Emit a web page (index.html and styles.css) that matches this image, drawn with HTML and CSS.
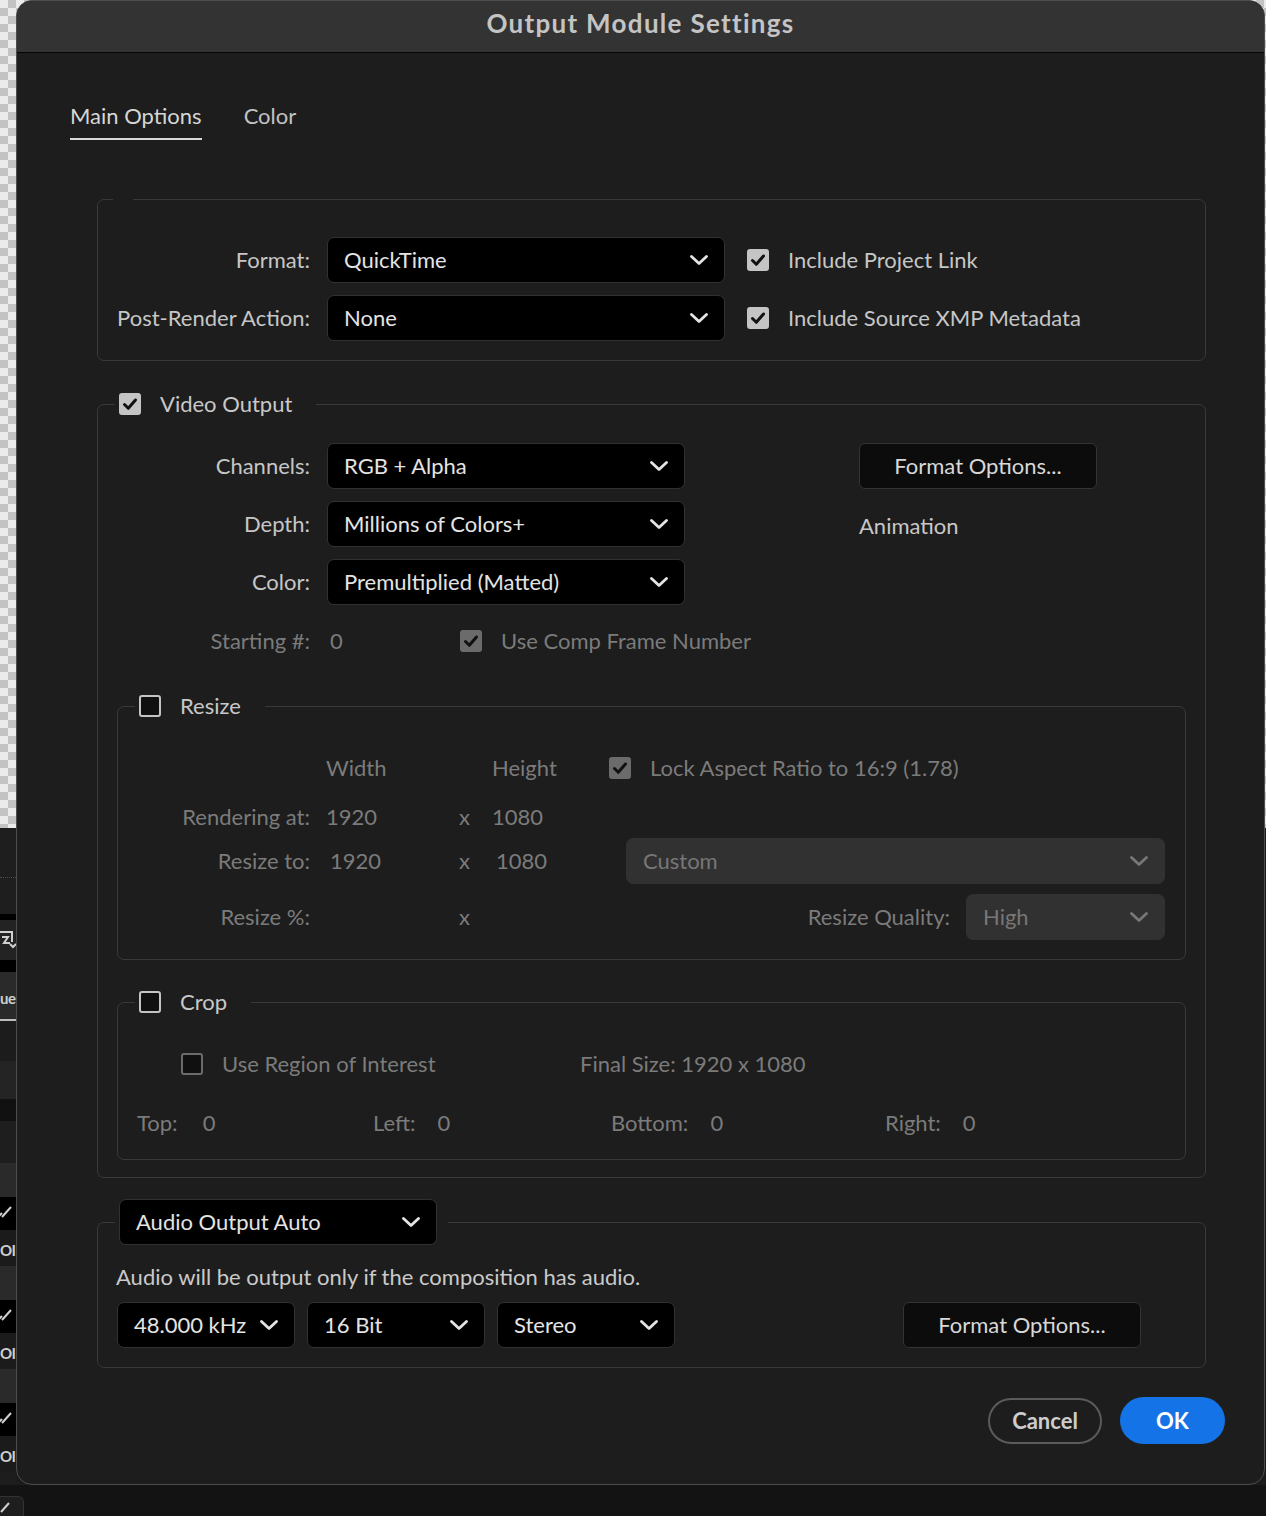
FILE: index.html
```html
<!DOCTYPE html>
<html lang="en">
<head>
    <meta charset="UTF-8">
    <title>Output Module Settings</title>
    <link rel="stylesheet" href="styles.css">
</head>
<body>
    <div class="desk">
        <div class="strip">
            <div class="seg-checker"></div>
            <div class="seg-top"></div>
            <div class="seg-rule"></div>
            <div class="seg-icon">
                <svg viewBox="0 0 16 24"><path d="M-2 4h14v10M10 16l3 3 3-3M2 9l6 0-4 6h6"/></svg>
            </div>
            <div class="seg-rule thick"></div>
            <div class="seg-tab">ue</div>
            <div class="seg-dark"></div>
            <div class="seg-mid"></div>
            <div class="seg-rule wide"></div>
            <div class="seg-dark tall"></div>
            <div class="seg-gap"></div>
            <div class="seg-check"><svg viewBox="0 0 16 20"><path d="M-2 14l4-4M2 14l9-10"/></svg></div>
            <div class="seg-ol">OI</div>
            <div class="seg-gap"></div>
            <div class="seg-check"><svg viewBox="0 0 16 20"><path d="M-2 14l4-4M2 14l9-10"/></svg></div>
            <div class="seg-ol">OI</div>
            <div class="seg-gap"></div>
            <div class="seg-check"><svg viewBox="0 0 16 20"><path d="M-2 14l4-4M2 14l9-10"/></svg></div>
            <div class="seg-ol">OI</div>
            <div class="seg-end"></div>
        </div>

        <div class="dialog">
            <div class="titlebar">Output Module Settings</div>

            <div class="dialog-body">
                <div class="tabs">
                    <div class="tab active">Main Options</div>
                    <div class="tab">Color</div>
                </div>

                <div class="groups">
                    <!-- format -->
                    <fieldset class="group group-format">
                        <legend class="legend-empty"></legend>
                        <div class="row">
                            <span class="lbl">Format:</span>
                            <div class="select w-format">
                                <span>QuickTime</span>
                                <svg class="chev" viewBox="0 0 18 10"><path d="M1.5 1.5l7.5 7 7.5-7"/></svg>
                            </div>
                            <div class="check-item ml-format">
                                <span class="cb on"><svg viewBox="0 0 22 22"><path d="M5.5 11.5l3.8 3.8 7.2-8.3"/></svg></span>
                                Include Project Link
                            </div>
                        </div>
                        <div class="row gap-row">
                            <span class="lbl">Post-Render Action:</span>
                            <div class="select w-format">
                                <span>None</span>
                                <svg class="chev" viewBox="0 0 18 10"><path d="M1.5 1.5l7.5 7 7.5-7"/></svg>
                            </div>
                            <div class="check-item ml-format">
                                <span class="cb on"><svg viewBox="0 0 22 22"><path d="M5.5 11.5l3.8 3.8 7.2-8.3"/></svg></span>
                                Include Source XMP Metadata
                            </div>
                        </div>
                    </fieldset>

                    <!-- video output -->
                    <fieldset class="group group-video">
                        <legend class="legend-check">
                            <span class="cb on"><svg viewBox="0 0 22 22"><path d="M5.5 11.5l3.8 3.8 7.2-8.3"/></svg></span>
                            Video Output
                        </legend>

                        <div class="video-top">
                            <div class="video-left">
                                <div class="row">
                                    <span class="lbl">Channels:</span>
                                    <div class="select w-video">
                                        <span>RGB + Alpha</span>
                                        <svg class="chev" viewBox="0 0 18 10"><path d="M1.5 1.5l7.5 7 7.5-7"/></svg>
                                    </div>
                                </div>
                                <div class="row gap-row">
                                    <span class="lbl">Depth:</span>
                                    <div class="select w-video">
                                        <span>Millions of Colors+</span>
                                        <svg class="chev" viewBox="0 0 18 10"><path d="M1.5 1.5l7.5 7 7.5-7"/></svg>
                                    </div>
                                </div>
                                <div class="row gap-row">
                                    <span class="lbl">Color:</span>
                                    <div class="select w-video">
                                        <span>Premultiplied (Matted)</span>
                                        <svg class="chev" viewBox="0 0 18 10"><path d="M1.5 1.5l7.5 7 7.5-7"/></svg>
                                    </div>
                                </div>
                            </div>
                            <div class="video-right">
                                <div class="button">Format Options...</div>
                                <div class="codec">Animation</div>
                            </div>
                        </div>

                        <div class="row start-row dim">
                            <span class="lbl">Starting #:</span>
                            <span class="start-val">0</span>
                            <div class="check-item">
                                <span class="cb on dim"><svg viewBox="0 0 22 22"><path d="M5.5 11.5l3.8 3.8 7.2-8.3"/></svg></span>
                                Use Comp Frame Number
                            </div>
                        </div>

                        <!-- resize -->
                        <fieldset class="group sub group-resize">
                            <legend class="legend-check">
                                <span class="cb"></span>
                                Resize
                            </legend>
                            <div class="rgrid r1 dim">
                                <span></span>
                                <span>Width</span>
                                <span></span>
                                <span>Height</span>
                                <div class="check-item">
                                    <span class="cb on dim"><svg viewBox="0 0 22 22"><path d="M5.5 11.5l3.8 3.8 7.2-8.3"/></svg></span>
                                    Lock Aspect Ratio to 16:9 (1.78)
                                </div>
                            </div>
                            <div class="rgrid r2 dim">
                                <span class="rlbl">Rendering at:</span>
                                <span>1920</span>
                                <span>x</span>
                                <span>1080</span>
                                <span></span>
                            </div>
                            <div class="rgrid r3 dim">
                                <span class="rlbl">Resize to:</span>
                                <span class="field">1920</span>
                                <span>x</span>
                                <span class="field">1080</span>
                                <div class="select off w-custom">
                                    <span>Custom</span>
                                    <svg class="chev" viewBox="0 0 18 10"><path d="M1.5 1.5l7.5 7 7.5-7"/></svg>
                                </div>
                            </div>
                            <div class="rgrid r4 dim">
                                <span class="rlbl">Resize %:</span>
                                <span></span>
                                <span>x</span>
                                <span></span>
                                <div class="quality">
                                    <span>Resize Quality:</span>
                                    <div class="select off w-quality">
                                        <span>High</span>
                                        <svg class="chev" viewBox="0 0 18 10"><path d="M1.5 1.5l7.5 7 7.5-7"/></svg>
                                    </div>
                                </div>
                            </div>
                        </fieldset>

                        <!-- crop -->
                        <fieldset class="group sub group-crop">
                            <legend class="legend-check">
                                <span class="cb"></span>
                                Crop
                            </legend>
                            <div class="crop-row1 dim">
                                <div class="check-item roi">
                                    <span class="cb dim"></span>
                                    Use Region of Interest
                                </div>
                                <span>Final Size: 1920 x 1080</span>
                            </div>
                            <div class="crop-row2 dim">
                                <div class="edge w-top"><span>Top:</span><span>0</span></div>
                                <div class="edge w-left"><span>Left:</span><span>0</span></div>
                                <div class="edge w-bottom"><span>Bottom:</span><span>0</span></div>
                                <div class="edge"><span>Right:</span><span>0</span></div>
                            </div>
                        </fieldset>
                    </fieldset>

                    <!-- audio -->
                    <fieldset class="group group-audio">
                        <legend class="legend-select">
                            <div class="select w-audio">
                                <span>Audio Output Auto</span>
                                <svg class="chev" viewBox="0 0 18 10"><path d="M1.5 1.5l7.5 7 7.5-7"/></svg>
                            </div>
                        </legend>
                        <div class="audio-note">Audio will be output only if the composition has audio.</div>
                        <div class="audio-row">
                            <div class="select w-small">
                                <span>48.000 kHz</span>
                                <svg class="chev" viewBox="0 0 18 10"><path d="M1.5 1.5l7.5 7 7.5-7"/></svg>
                            </div>
                            <div class="select w-small">
                                <span>16 Bit</span>
                                <svg class="chev" viewBox="0 0 18 10"><path d="M1.5 1.5l7.5 7 7.5-7"/></svg>
                            </div>
                            <div class="select w-small">
                                <span>Stereo</span>
                                <svg class="chev" viewBox="0 0 18 10"><path d="M1.5 1.5l7.5 7 7.5-7"/></svg>
                            </div>
                            <div class="button audio-btn">Format Options...</div>
                        </div>
                    </fieldset>
                </div>

                <div class="actions">
                    <div class="btn-cancel">Cancel</div>
                    <div class="btn-ok">OK</div>
                </div>
            </div>
        </div>
    </div>

    <div class="dock">
        <div class="dock-tab"><svg viewBox="0 0 16 14"><path d="M1 12l8-9"/></svg></div>
    </div>
</body>
</html>
```

FILE: styles.css
```css
* {
    box-sizing: border-box;
}

body {
    margin: 0;
    background: #121212;
    font-family: Lato, "Noto Sans", sans-serif;
    font-size: 22px;
    line-height: 24px;
    color: #c6c6c6;
}

.desk {
    display: flex;
    height: 1485px;
    background:
        linear-gradient(#1c1c1c, #1c1c1c) 0 828px / 100% 657px no-repeat,
        repeating-conic-gradient(#c3c3c3 0 25%, #ebebeb 0 50%) 0 0 / 16px 16px;
}

/* left edge of the app behind the dialog */
.strip {
    width: 16px;
    flex: none;
    overflow: hidden;
    display: flex;
    flex-direction: column;
    color: #cfcfcf;
    font-weight: 700;
    font-size: 12px;
    letter-spacing: -0.5px;
}

.strip svg {
    width: 16px;
    fill: none;
    stroke: #d0d0d0;
    stroke-width: 2;
}

.seg-checker { height: 828px; }
.seg-top { height: 86px; background: #1e1e1e; position: relative; }
.seg-top::after {
    content: "";
    position: absolute;
    left: 0;
    right: 0;
    top: 49px;
    border-top: 1px dotted #4a4a4a;
}
.seg-rule { height: 6px; background: #000; }
.seg-rule.thick { height: 12px; }
.seg-rule.wide { height: 22px; background: #111; }
.seg-icon { height: 40px; background: #232323; padding-top: 8px; }
.seg-icon svg { height: 24px; }
.seg-tab {
    height: 49px;
    background: #2a2a2a;
    padding-top: 14px;
    font-size: 15px;
    border-bottom: 2px solid #bdbdbd;
}
.seg-dark { height: 40px; background: #1c1c1c; }
.seg-dark.tall { height: 42px; background: #1e1e1e; }
.seg-mid { height: 38px; background: #242424; }
.seg-gap { height: 34px; background: #2a2a2a; }
.seg-check { height: 33px; background: #000; padding-top: 6px; }
.seg-check svg { height: 20px; }
.seg-ol { height: 36px; background: #1b1b1b; padding-top: 8px; font-size: 15px; }
.seg-end { flex: 1; background: #1d1d1d; }

/* dialog */
.dialog {
    width: 1249px;
    flex: none;
    height: 1485px;
    border: 1px solid #4d4d4d;
    border-radius: 16px;
    background: #1d1d1d;
    overflow: hidden;
}

.titlebar {
    height: 52px;
    padding-bottom: 7px;
    line-height: 44px;
    background: #333333;
    border-bottom: 1px solid #050505;
    text-align: center;
    font-size: 26px;
    font-weight: 700;
    letter-spacing: 1.3px;
    color: #c4c4c4;
}

.dialog-body {
    padding: 49px 0 0 0;
}

.tabs {
    display: flex;
    gap: 42px;
    margin-left: 53px;
}

.tab {
    line-height: 28px;
    padding-bottom: 8px;
    border-bottom: 2px solid transparent;
    color: #c2c2c2;
}

.tab.active {
    color: #d6d6d6;
    border-bottom-color: #d8d8d8;
}

.groups {
    margin: 59px 58px 0 80px;
}

/* group boxes */
.group {
    margin: 0;
    padding: 0;
    min-width: 0;
    border: 1px solid #393939;
    border-radius: 7px;
}

.group legend {
    margin-left: 17px;
    padding: 0 24px 0 4px;
}

.legend-empty {
    height: 0;
    width: 20px;
}

.group .legend-empty {
    margin-left: 15px;
    padding: 0;
}

.legend-check {
    display: flex;
    align-items: center;
    gap: 19px;
    height: 24px;
    line-height: 22px;
    color: #c8c8c8;
}

.group .legend-select {
    padding-right: 11px;
}

.group-format {
    padding: 37px 0 19px 0;
}

.group-video {
    margin-top: 31px;
    padding: 27px 0 17px 0;
}

.group.sub {
    margin-left: 19px;
    margin-right: 19px;
}

.group-resize {
    margin-top: 38px;
    padding: 0 20px 19px 0;
}

.group-crop {
    margin-top: 30px;
    padding: 0 0 21px 0;
}

.group-audio {
    margin-top: 21px;
    padding: 20px 0 19px 0;
}

/* rows */
.row {
    display: flex;
    align-items: center;
    height: 46px;
}

.gap-row {
    margin-top: 12px;
}

.lbl {
    flex: none;
    width: 212px;
    margin-right: 17px;
    text-align: right;
}

.dim {
    color: #7b7b7b;
}

/* controls */
.select {
    flex: none;
    display: flex;
    align-items: center;
    justify-content: space-between;
    height: 46px;
    padding: 0 16px;
    background: #000;
    border: 1px solid #313131;
    border-radius: 7px;
    color: #e4e4e4;
}

.select.off {
    background: #313131;
    border-color: #313131;
    color: #777;
}

.chev {
    width: 18px;
    height: 10px;
    fill: none;
    stroke: currentColor;
    stroke-width: 2.8;
    stroke-linecap: round;
    stroke-linejoin: round;
}

.w-format { width: 398px; }
.w-video { width: 358px; }
.w-custom { width: 539px; margin-left: 17px; }
.w-quality { width: 199px; }
.w-audio { width: 318px; }
.w-small { width: 178px; }

.cb {
    flex: none;
    width: 22px;
    height: 22px;
    border-radius: 3px;
    border: 2px solid #c4c4c4;
    background: #101010;
}

.cb.on {
    border: 0;
    background: #c4c4c4;
}

.cb.dim {
    border-color: #6b6b6b;
}

.cb.on.dim {
    background: #6b6b6b;
}

.cb svg {
    display: block;
    width: 22px;
    height: 22px;
    fill: none;
    stroke: #111;
    stroke-width: 3;
    stroke-linecap: round;
    stroke-linejoin: round;
}

.check-item {
    display: flex;
    align-items: center;
    gap: 19px;
}

.ml-format {
    margin-left: 22px;
}

.button {
    display: flex;
    align-items: center;
    justify-content: center;
    width: 238px;
    height: 46px;
    background: #0c0c0c;
    border: 1px solid #333;
    border-radius: 6px;
    color: #d8d8d8;
}

/* video output */
.video-top {
    display: flex;
}

.video-left {
    width: 587px;
}

.video-right {
    margin-left: 174px;
}

.codec {
    margin-top: 25px;
    color: #c8c8c8;
}

.start-row {
    height: 30px;
    margin-top: 21px;
}

.start-val {
    width: 133px;
    padding-left: 3px;
}

/* resize */
.rgrid {
    display: grid;
    grid-template-columns: 192px 117px 17px 101px 1fr;
    column-gap: 16px;
    align-items: center;
}

.rlbl {
    text-align: right;
}

.r1 { height: 30px; margin-top: 35px; }
.r2 { height: 30px; margin-top: 19px; }
.r3 { height: 46px; margin-top: 6px; }
.r4 { height: 46px; margin-top: 10px; }

.field {
    padding-left: 4px;
}

.quality {
    display: flex;
    align-items: center;
    justify-content: flex-end;
    gap: 16px;
}

/* crop */
.crop-row1 {
    display: flex;
    align-items: center;
    height: 30px;
    margin-top: 35px;
    padding-left: 63px;
}

.roi {
    width: 399px;
}

.crop-row2 {
    display: flex;
    align-items: center;
    height: 30px;
    margin-top: 29px;
    padding-left: 19px;
}

.edge {
    display: flex;
    gap: 22px;
}

.w-top { width: 236px; gap: 25px; }
.w-left { width: 238px; }
.w-bottom { width: 274px; }

/* audio */
.audio-note {
    padding-left: 18px;
    color: #cacaca;
}

.audio-row {
    display: flex;
    align-items: center;
    gap: 12px;
    margin-top: 13px;
    padding-left: 19px;
}

.audio-btn {
    margin-left: 216px;
}

/* dialog buttons */
.actions {
    display: flex;
    justify-content: flex-end;
    align-items: center;
    gap: 18px;
    margin-top: 29px;
    padding-right: 39px;
}

.btn-cancel,
.btn-ok {
    display: flex;
    align-items: center;
    justify-content: center;
    border-radius: 24px;
    font-weight: 700;
}

.btn-cancel {
    width: 114px;
    height: 46px;
    border: 2px solid #5b5b5b;
    color: #cdcdcd;
}

.btn-ok {
    width: 105px;
    height: 47px;
    background: #1473e6;
    color: #fff;
}

/* bottom dock */
.dock {
    height: 31px;
    background: #131313;
    padding-top: 11px;
}

.dock-tab {
    width: 24px;
    height: 20px;
    background: #1e1e1e;
    border: 1px solid #333;
    border-left: 0;
    border-bottom: 0;
    border-top-right-radius: 6px;
}

.dock-tab svg {
    display: block;
    width: 16px;
    height: 14px;
    margin-top: 3px;
    fill: none;
    stroke: #d0d0d0;
    stroke-width: 2;
}
```
